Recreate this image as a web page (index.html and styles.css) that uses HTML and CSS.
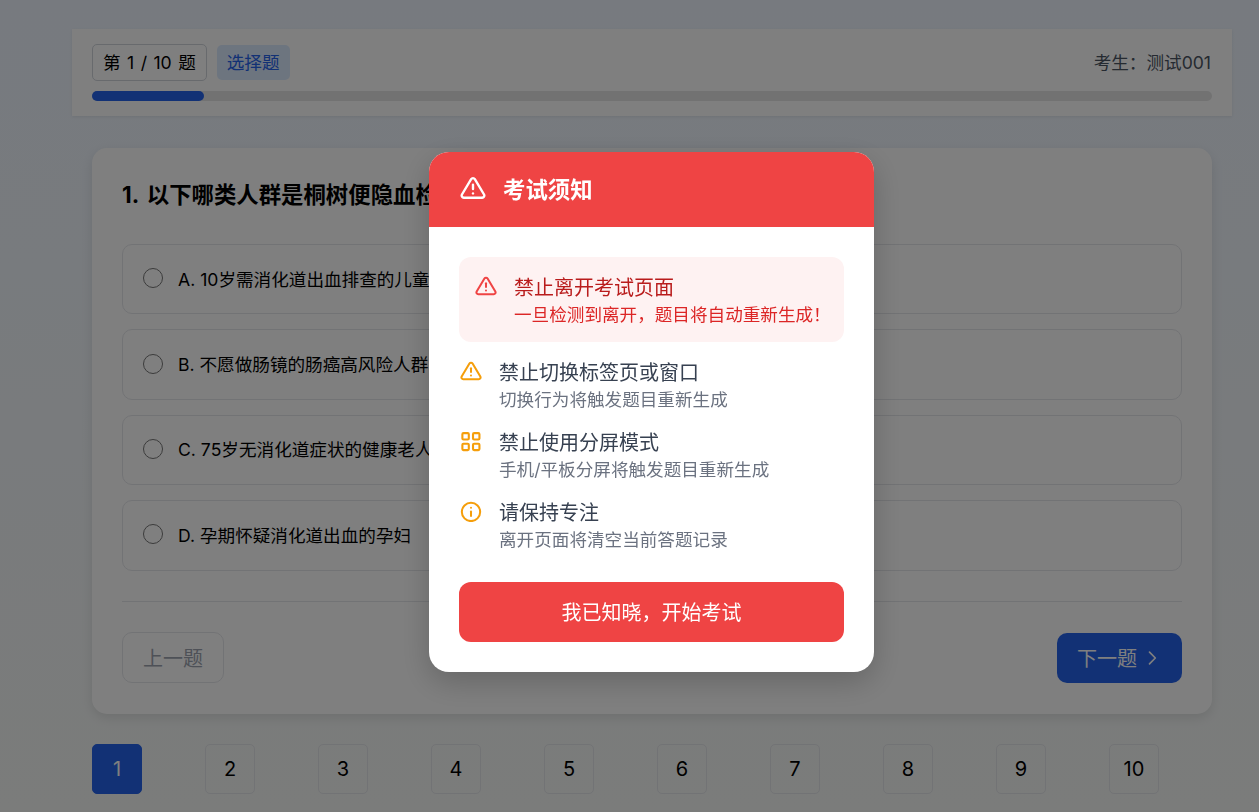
FILE: index.html
```html
<!DOCTYPE html>
<html lang="zh-CN">
<head>
    <meta charset="UTF-8">
    <meta name="viewport" content="width=device-width, initial-scale=1.0">
    <title>考试</title>
    <link rel="stylesheet" href="styles.css">
</head>
<body>

    <div class="page">
        <header class="exam-header">
            <div class="header-row">
                <div class="header-tags">
                    <span class="tag tag-count">第 1 / 10 题</span>
                    <span class="tag tag-type">选择题</span>
                </div>
                <span class="student">考生：测试001</span>
            </div>
            <div class="progress"><div class="progress-bar" style="width: 10%"></div></div>
        </header>

        <main class="content">
            <section class="question-card">
                <h2 class="question-title">1. 以下哪类人群是桐树便隐血检测的适用人群？</h2>
                <div class="options">
                    <label class="option"><span class="radio"></span>A. 10岁需消化道出血排查的儿童</label>
                    <label class="option"><span class="radio"></span>B. 不愿做肠镜的肠癌高风险人群</label>
                    <label class="option"><span class="radio"></span>C. 75岁无消化道症状的健康老人</label>
                    <label class="option"><span class="radio"></span>D. 孕期怀疑消化道出血的孕妇</label>
                </div>
                <div class="question-nav">
                    <button class="btn btn-prev">上一题</button>
                    <button class="btn btn-next">下一题
                        <svg width="20" height="20" viewBox="0 0 24 24" fill="none" stroke="currentColor" stroke-width="2" stroke-linecap="round" stroke-linejoin="round"><path d="M9 5l7 7-7 7"/></svg>
                    </button>
                </div>
            </section>

            <nav class="pager">
                <a class="page-num active">1</a>
                <a class="page-num">2</a>
                <a class="page-num">3</a>
                <a class="page-num">4</a>
                <a class="page-num">5</a>
                <a class="page-num">6</a>
                <a class="page-num">7</a>
                <a class="page-num">8</a>
                <a class="page-num">9</a>
                <a class="page-num">10</a>
            </nav>
        </main>
    </div>

    <div class="overlay">
        <div class="modal">
            <div class="modal-header">
                <svg class="header-icon" width="26" height="26" viewBox="0 0 24 24" fill="none" stroke="currentColor" stroke-width="2.2" stroke-linecap="round" stroke-linejoin="round"><path d="M10.29 3.86L1.82 18a2 2 0 0 0 1.71 3h16.94a2 2 0 0 0 1.71-3L13.71 3.86a2 2 0 0 0-3.42 0z"/><path d="M12 9v4"/><path d="M12 17v.01"/></svg>
                <h3>考试须知</h3>
            </div>
            <div class="modal-body">
                <div class="notice notice-danger">
                    <svg class="notice-icon" width="22" height="22" viewBox="0 0 24 24" fill="none" stroke="currentColor" stroke-width="2.2" stroke-linecap="round" stroke-linejoin="round"><path d="M10.29 3.86L1.82 18a2 2 0 0 0 1.71 3h16.94a2 2 0 0 0 1.71-3L13.71 3.86a2 2 0 0 0-3.42 0z"/><path d="M12 9v4"/><path d="M12 17v.01"/></svg>
                    <div class="notice-text">
                        <div class="notice-title">禁止离开考试页面</div>
                        <div class="notice-desc">一旦检测到离开，题目将自动重新生成！</div>
                    </div>
                </div>
                <div class="notice">
                    <svg class="notice-icon" width="22" height="22" viewBox="0 0 24 24" fill="none" stroke="currentColor" stroke-width="2.2" stroke-linecap="round" stroke-linejoin="round"><path d="M10.29 3.86L1.82 18a2 2 0 0 0 1.71 3h16.94a2 2 0 0 0 1.71-3L13.71 3.86a2 2 0 0 0-3.42 0z"/><path d="M12 9v4"/><path d="M12 17v.01"/></svg>
                    <div class="notice-text">
                        <div class="notice-title">禁止切换标签页或窗口</div>
                        <div class="notice-desc">切换行为将触发题目重新生成</div>
                    </div>
                </div>
                <div class="notice">
                    <svg class="notice-icon" width="22" height="22" viewBox="0 0 24 24" fill="none" stroke="currentColor" stroke-width="2.3" stroke-linejoin="round"><rect x="2.6" y="3.4" width="7" height="7" rx="1.2"/><rect x="14.2" y="3.4" width="7" height="7" rx="1.2"/><rect x="2.6" y="15" width="7" height="7" rx="1.2"/><rect x="14.2" y="15" width="7" height="7" rx="1.2"/></svg>
                    <div class="notice-text">
                        <div class="notice-title">禁止使用分屏模式</div>
                        <div class="notice-desc">手机/平板分屏将触发题目重新生成</div>
                    </div>
                </div>
                <div class="notice">
                    <svg class="notice-icon" width="22" height="22" viewBox="0 0 24 24" fill="none" stroke="currentColor" stroke-width="2.2" stroke-linecap="round"><circle cx="12" cy="13" r="10"/><path d="M12 12.5v5"/><path d="M12 8.5v.01"/></svg>
                    <div class="notice-text">
                        <div class="notice-title">请保持专注</div>
                        <div class="notice-desc">离开页面将清空当前答题记录</div>
                    </div>
                </div>
                <button class="btn-confirm">我已知晓，开始考试</button>
            </div>
        </div>
    </div>

</body>
</html>
```

FILE: styles.css
```css
* {
    box-sizing: border-box;
}
html, body {
    height: 100%;
}
body {
    margin: 0;
    overflow: hidden;
    font-family: Inter, "Noto Sans CJK SC", sans-serif;
    color: #000;
    background: linear-gradient(180deg, #eef5ff 0%, #f6f8f6 100%);
}
.page {
    width: 1160px;
    margin: 29px 0 0 72px;
}
.exam-header {
    height: 87px;
    padding: 15px 20px 0;
    background: rgba(255, 255, 255, 0.9);
    box-shadow: 0 1px 3px rgba(0, 0, 0, 0.08);
}
.header-row {
    display: flex;
    justify-content: space-between;
    align-items: center;
    height: 37px;
}
.header-tags {
    display: flex;
    align-items: center;
    gap: 10px;
}
.tag {
    padding: 0 10px;
    border-radius: 5px;
    font-size: 17.6px;
}
.tag-count {
    height: 37px;
    border: 1px solid #d1d5db;
    line-height: 35px;
    word-spacing: 1.5px;
}
.tag-type {
    height: 35px;
    line-height: 35px;
    color: #2563eb;
    background: #dbeafe;
}
.student {
    margin-right: 1px;
    padding-bottom: 2px;
    font-size: 17.6px;
    color: #4b5563;
}
.progress {
    height: 10px;
    margin-top: 10px;
    border-radius: 5px;
    background: #e5e5e5;
}
.progress-bar {
    height: 100%;
    border-radius: 5px;
    background: #2563eb;
}
.content {
    padding: 32px 20px 0;
}
.question-card {
    height: 566px;
    padding: 30px;
    border-radius: 15px;
    background: #fff;
    box-shadow: 0 4px 12px rgba(0, 0, 0, 0.1);
}
.question-title {
    height: 36px;
    margin: 0 0 30px;
    font-size: 22.4px;
    line-height: 34px;
    font-weight: 700;
    word-spacing: 3px;
}
.options {
    display: flex;
    flex-direction: column;
    gap: 15px;
}
.option {
    display: flex;
    align-items: center;
    height: 70.4px;
    padding: 0 20px 2px;
    border: 1px solid #e5e7eb;
    border-radius: 10px;
    font-size: 17.6px;
}
.radio {
    width: 20px;
    height: 20px;
    margin-right: 15px;
    border: 1.5px solid #777;
    border-radius: 50%;
}
.question-nav {
    display: flex;
    justify-content: space-between;
    align-items: center;
    margin-top: 30px;
    padding-top: 30px;
    border-top: 1px solid #e5e7eb;
}
.btn {
    display: flex;
    align-items: center;
    gap: 5px;
    height: 51px;
    padding: 0 20px;
    border-radius: 10px;
    font-family: inherit;
    font-size: 20px;
}
.btn-prev {
    color: #9ca3af;
    background: #fff;
    border: 1px solid #e5e7eb;
}
.btn-next {
    height: 50px;
    margin-top: 1px;
    color: #fff;
    background: #2563eb;
    border: none;
}
.pager {
    display: grid;
    grid-template-columns: repeat(10, 1fr);
    gap: 10px;
    margin-top: 30px;
}
.page-num {
    display: flex;
    align-items: center;
    justify-content: center;
    width: 50px;
    height: 50px;
    padding-bottom: 1px;
    border: 1px solid #e5e7eb;
    border-radius: 5px;
    font-size: 20px;
}
.page-num.active {
    color: #fff;
    background: #2563eb;
    border-color: #2563eb;
}
.overlay {
    position: fixed;
    inset: 0;
    display: flex;
    align-items: center;
    justify-content: center;
    padding: 12px 0 0 44px;
    background: rgba(0, 0, 0, 0.5);
}
.modal {
    width: 445px;
    height: 520px;
    border-radius: 20px;
    overflow: hidden;
    background: #fff;
    box-shadow: 0 10px 30px rgba(0, 0, 0, 0.2);
}
.modal-header {
    display: flex;
    align-items: center;
    height: 75px;
    padding: 0 30px 3px 31px;
    color: #fff;
    background: #ef4444;
}
.header-icon {
    margin-right: 17px;
}
.modal-header h3 {
    margin: 0;
    font-size: 22.4px;
    font-weight: 700;
}
.modal-body {
    padding: 30px;
}
.notice {
    display: flex;
    gap: 16px;
    margin-bottom: 16px;
    color: #374151;
}
.notice-icon {
    flex: none;
    margin: 2px 1px 0;
    color: #f59e0b;
}
.notice-text {
    height: 54px;
    padding-top: 1px;
}
.notice-title {
    font-size: 20px;
    line-height: 28px;
}
.notice-desc {
    font-size: 17.6px;
    line-height: 26px;
    color: #6b7280;
}
.notice-danger {
    height: 85px;
    padding: 16px 10px 15px 15px;
    border-radius: 12px;
    background: #fef2f2;
}
.notice-danger .notice-icon {
    color: #ef4444;
}
.notice-danger .notice-title {
    color: #b91c1c;
}
.notice-danger .notice-desc {
    color: #dc2626;
    white-space: nowrap;
}
.btn-confirm {
    width: 100%;
    height: 60px;
    margin-top: 14px;
    padding-bottom: 2px;
    border: none;
    border-radius: 12px;
    color: #fff;
    background: #ef4444;
    font-family: inherit;
    font-size: 20px;
}
```
